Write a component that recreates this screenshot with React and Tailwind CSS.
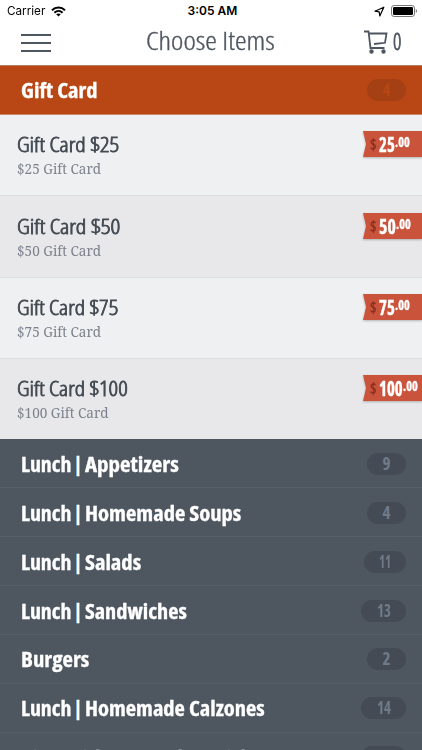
import { useLayoutEffect, useRef, useState } from "react";

/* Text squeezed to a given width, keeping its font size. */
function Fit({ w, className = "", children }) {
  const ref = useRef(null);
  const [s, setS] = useState(1);
  useLayoutEffect(() => {
    setS(w / ref.current.offsetWidth);
  }, [w]);
  return (
    <span className={"block whitespace-nowrap " + className} style={{ width: w }}>
      <span ref={ref} className="inline-block origin-left whitespace-pre" style={{ transform: `scaleX(${s})` }}>
        {children}
      </span>
    </span>
  );
}

const cards = [
  { n: "25", tw: 102, sw: 84, pw: 16, h: "h-[81px] border-b pt-[16px]" },
  { n: "50", tw: 103, sw: 84, pw: 17, h: "h-[82px] border-b pt-[17px]" },
  { n: "75", tw: 101, sw: 84, pw: 16, h: "h-[81px] border-b pt-[16px]" },
  { n: "100", tw: 111, sw: 92, pw: 24, h: "h-[80px] pt-[16px]" },
];

const sections = [
  { t: "Lunch | Appetizers", w: 158, n: "9", nw: 8 },
  { t: "Lunch | Homemade Soups", w: 220, n: "4", nw: 8 },
  { t: "Lunch | Salads", w: 120, n: "11", nw: 12 },
  { t: "Lunch | Sandwiches", w: 166, n: "13", nw: 14 },
  { t: "Burgers", w: 68, n: "2", nw: 8 },
  { t: "Lunch | Homemade Calzones", w: 244, n: "14", nw: 14 },
  { t: "Pizza Dishes Sampler Brick Oven C", w: 306, n: "10", nw: 14, words: [["Pizza", 44], ["Dishes", 52], ["Sampler", 72], ["Brick", 44], ["Oven", 54], ["C", 11]] },
];

function Title({ s }) {
  const cls = "text-[21px] leading-[30px] font-bold text-white [-webkit-text-stroke:0.3px_#fff]";
  if (s.words)
    return (
      <div className={"flex gap-[6px] " + cls}>
        {s.words.map(([word, w]) => (
          <Fit key={word} w={w}>{word}</Fit>
        ))}
      </div>
    );
  if (!s.t.startsWith("Lunch | ")) return <Fit w={s.w} className={cls}>{s.t}</Fit>;
  return (
    <div className={"flex " + cls}>
      <Fit w={50}>Lunch</Fit>
      <Fit w={8} className="mx-[3px] text-[19px] font-bold [-webkit-text-stroke:0.4px_#fff]">|</Fit>
      <Fit w={s.w - 64}>{s.t.slice(8)}</Fit>
    </div>
  );
}

export default function App() {
  return (
    <div className="flex h-[750px] w-[422px] flex-col overflow-hidden bg-white font-['Open_Sans',sans-serif] font-stretch-condensed">
      <div className="grid h-[22px] shrink-0 grid-cols-3 items-center px-[7px] font-['Inter',sans-serif] text-[12px] leading-[22px] text-black font-stretch-normal">
        <div className="flex items-center gap-[6px]">
          <Fit w={38}>Carrier</Fit>
          <svg width="15" height="11" viewBox="0 0 15 11" fill="none" stroke="#000" strokeWidth="2">
            <path d="M1 4.2C4.7.7 10.3.7 14 4.2M3.4 6.7c2.4-2.2 5.800-2.200 8.200 0" />
            <path d="M5.2 8.3c1.4-1.2 3.2-1.2 4.6 0L7.5 10.6z" fill="#000" stroke="none" />
          </svg>
        </div>
        <div className="flex justify-center pl-[3px]">
          <Fit w={50} className="font-semibold">3:05 AM</Fit>
        </div>
        <div className="-mr-[3px] flex items-center justify-end gap-[6px]">
          <svg width="11" height="11" viewBox="0 0 11 11" fill="none" stroke="#000" strokeWidth="1.2" strokeLinejoin="round">
            <path d="M9.8 1.2 1 5.2l4.2.6.6 4.2z" />
          </svg>
          <svg width="27" height="12" viewBox="0 0 27 12">
            <rect x=".5" y=".5" width="23" height="11" rx="2.6" fill="#fff" stroke="#777" />
            <rect x="2" y="2" width="20" height="8" rx="1.2" />
            <path d="M24.8 4v4c1.6-.8 1.6-3.2 0-4z" fill="#777" />
          </svg>
        </div>
      </div>
      <header className="flex h-[43px] shrink-0 items-center pr-[21px] pl-[21px] text-[#4e5660]">
        <div className="-mt-px flex w-[30px] flex-col gap-[6px]">
          <i className="h-[2px] bg-[#4e5660]" />
          <i className="h-[2px] bg-[#4e5660]" />
          <i className="h-[2px] bg-[#4e5660]" />
        </div>
        <Fit w={129} className="-mt-[7px] ml-[95px] text-[26px] leading-[36px] font-light [-webkit-text-stroke:0.35px_#4e5660]">Choose Items</Fit>
        <div className="-mt-[3px] ml-auto flex items-center gap-[5px]">
          <svg width="24" height="24" viewBox="0 0 24 24" fill="none" stroke="#4e5660" strokeWidth="1.8">
            <path d="M0 1.500h4.500L6.500 18h14M5 3.500h17.500l-1.500 9.300L10 14" />
            <circle cx="7.500" cy="21.500" r="1.300" fill="#4e5660" />
            <circle cx="19.500" cy="21.500" r="1.300" fill="#4e5660" />
          </svg>
          <Fit w={8} className="-mt-[3px] text-[23px] leading-[30px] font-light [-webkit-text-stroke:0.8px_#4e5660]">0</Fit>
        </div>
      </header>
      <div className="flex h-[50px] shrink-0 items-center justify-between border-y border-t-[#b17e66] border-b-[#c8886a] bg-[#b84715] pr-[16px] pl-[21px]">
        <Fit w={77} className="text-[21px] leading-[30px] font-bold text-white [-webkit-text-stroke:0.3px_#fff]">Gift Card</Fit>
        <div className="flex h-[22px] w-[39px] items-center justify-center rounded-full bg-[#a44014]">
          <Fit w={8} className="text-[17px] leading-[22px] font-bold text-[#b84715]">4</Fit>
        </div>
      </div>
      {cards.map((c, i) => (
        <div
          key={c.n}
          className={"flex shrink-0 justify-between border-[#dddee0] pl-[17px] " + c.h + (i % 2 ? " bg-[#e8e8ea]" : " bg-[#eff0f2]")}
        >
          <div>
            <Fit w={c.tw} className="-mt-px text-[21px] leading-[28px] font-light text-[#434a52] [-webkit-text-stroke:0.8px_#434a52]">{"Gift Card $" + c.n}</Fit>
            <Fit w={c.sw} className="font-['Noto_Serif','Liberation_Serif',serif] text-[15px] leading-[20px] text-[#7c828d]">{"$" + c.n + " Gift Card"}</Fit>
          </div>
          <div className="h-[26px] w-[60px] drop-shadow-[0_1px_1px_rgba(0,0,0,0.25)]">
            <div className="flex h-full bg-[#ca533c] pl-[8px] text-white [clip-path:polygon(1px_0,100%_0,100%_100%,1px_100%,4px_50%)]">
              <Fit w={7} className="text-[16px] leading-[26px] font-bold text-[#86301f]">$</Fit>
              <Fit w={c.pw} className="ml-[2px] text-[21px] leading-[27px] font-bold [-webkit-text-stroke:0.4px_#fff]">{c.n}</Fit>
              <Fit w={15} className="text-[14px] leading-[21px] font-bold [-webkit-text-stroke:0.3px_#fff]">.00</Fit>
            </div>
          </div>
        </div>
      ))}
      {sections.map((s, i) => (
        <div
          key={s.t}
          className={
            "flex h-[49px] shrink-0 justify-between border-b border-[#565e68] bg-[#4e5660] pr-[16px] pl-[21px] " +
            (s.words ? "items-start pt-[10px]" : i < 4 ? "items-center pt-[2px]" : "items-center")
          }
        >
          <Title s={s} />
          <div className={"flex h-[22px] items-center justify-center rounded-full bg-[#444b55] " + (s.words ? "mt-[3px] w-[45px]" : s.n === "11" ? "w-[42px]" : s.n.length > 1 ? "w-[45px]" : "w-[39px]")}>
            <Fit w={s.nw} className="text-[17px] leading-[22px] font-bold text-[#707b89]">{s.n}</Fit>
          </div>
        </div>
      ))}
    </div>
  );
}
